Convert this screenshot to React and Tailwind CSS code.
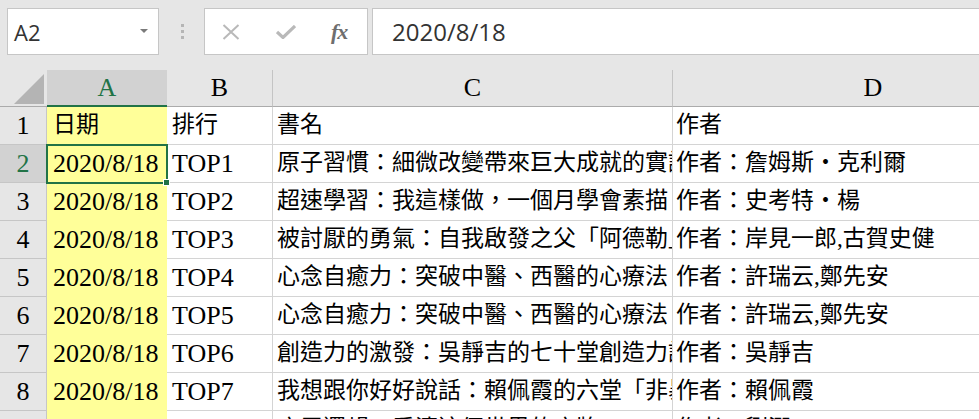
const SERIF = "font-['Liberation_Serif','Noto_Sans_CJK_TC',serif]";
const CJK = "font-['Liberation_Serif','Noto_Sans_CJK_TC',serif]";

const rows = [
  ["日期", "排行", "書名", "作者"],
  ["2020/8/18", "TOP1", "原子習慣：細微改變帶來巨大成就的實證法則", "作者：詹姆斯‧克利爾"],
  ["2020/8/18", "TOP2", "超速學習：我這樣做，一個月學會素描，一年學會四種語言", "作者：史考特‧楊"],
  ["2020/8/18", "TOP3", "被討厭的勇氣：自我啟發之父「阿德勒」的教導", "作者：岸見一郎,古賀史健"],
  ["2020/8/18", "TOP4", "心念自癒力：突破中醫、西醫的心療法", "作者：許瑞云,鄭先安"],
  ["2020/8/18", "TOP5", "心念自癒力：突破中醫、西醫的心療法", "作者：許瑞云,鄭先安"],
  ["2020/8/18", "TOP6", "創造力的激發：吳靜吉的七十堂創造力課", "作者：吳靜吉"],
  ["2020/8/18", "TOP7", "我想跟你好好說話：賴佩霞的六堂「非暴力溝通」課", "作者：賴佩霞"],
  ["2020/8/18", "TOP8", "底層邏輯：看清這個世界的底牌", "作者：劉潤"],
];

const isLatin = (s) => /^[\x00-\x7F]+$/.test(s);

function Cell({ text, className }) {
  const latin = isLatin(text);
  return (
    <div
      className={`h-[38px] overflow-hidden whitespace-nowrap text-black ${
        latin
          ? "text-[26px] leading-[37px] " + SERIF
          : "text-[23px] leading-[35px] " + CJK
      } ${className}`}
    >
      {text}
    </div>
  );
}

export default function App() {
  return (
    <div className="w-[979px] h-[419px] overflow-hidden bg-[#e6e6e6] relative">
      {/* Toolbar */}
      <div className="flex h-[70px] pt-[8px]">
        <div className="ml-[7px] w-[152px] h-[47px] bg-white border border-[#c6c6c6] flex items-center justify-between pl-[6px] pr-[10px]">
          <span className="font-['Open_Sans',sans-serif] text-[22px] text-[#333] leading-none">A2</span>
          <svg width="8" height="5" viewBox="0 0 8 5">
            <path d="M0 0 L8 0 L4 4 Z" fill="#7a7a7a" />
          </svg>
        </div>
        <div className="w-[45px] h-[47px] flex flex-col items-center justify-center gap-[3px] pl-[1px]">
          <div className="w-[3px] h-[3px] bg-[#b5b5b5]" />
          <div className="w-[3px] h-[3px] bg-[#b5b5b5]" />
          <div className="w-[3px] h-[3px] bg-[#b5b5b5]" />
        </div>
        <div className="w-[164px] h-[47px] bg-white border border-[#c6c6c6] flex items-center">
          <svg className="ml-[17px]" width="18" height="16" viewBox="0 0 18 16">
            <path d="M1.5 1 L16.5 15 M16.5 1 L1.5 15" stroke="#b9b9b9" strokeWidth="2" fill="none" />
          </svg>
          <svg className="ml-[36px]" width="20" height="14" viewBox="0 0 20 14">
            <path d="M1 7 L7 12.5 L19 1" stroke="#b9b9b9" strokeWidth="3.2" fill="none" />
          </svg>
          <span className="ml-[35px] font-['Liberation_Serif',serif] italic font-bold text-[22px] text-[#6e6e6e] leading-none tracking-[-1px]">
            fx
          </span>
        </div>
        <div className="ml-[4px] flex-1 h-[47px] bg-white border border-[#c6c6c6] border-r-0 flex items-center pl-[19px]">
          <span className="font-['Open_Sans',sans-serif] text-[24px] text-[#333] leading-none">2020/8/18</span>
        </div>
      </div>

      {/* Column headers */}
      <div className={`flex h-[37px] ${SERIF} text-[26px] leading-[36px]`}>
        <div className="w-[47px] h-[37px] border-b border-[#ababab] relative shrink-0">
          <svg className="absolute left-[14px] top-[4px]" width="30" height="30" viewBox="0 0 30 30">
            <path d="M30 0 L30 30 L0 30 Z" fill="#b4b4b4" />
          </svg>
        </div>
        <div className="w-[120px] shrink-0 bg-[#d2d2d2] border-b-2 border-[#217346] text-center text-[#217346]">A</div>
        <div className="w-[106px] shrink-0 border-b border-r border-[#ababab] border-r-[#c4c4c4] text-center">B</div>
        <div className="w-[400px] shrink-0 border-b border-r border-[#ababab] border-r-[#c4c4c4] text-center">C</div>
        <div className="w-[400px] shrink-0 border-b border-[#ababab] text-center">D</div>
      </div>

      {/* Rows */}
      <div className="relative bg-white">
        {rows.map((r, i) => (
          <div key={i} className="flex h-[38px]">
            <div
              className={`w-[47px] shrink-0 h-[38px] border-b border-r border-[#c6c6c6] text-center text-[26px] leading-[37px] ${SERIF} ${
                i === 1 ? "bg-[#d2d2d2] text-[#217346]" : "bg-[#e6e6e6] text-black"
              }`}
            >
              {i + 1}
            </div>
            <Cell text={r[0]} className="w-[120px] shrink-0 bg-[#ffff99] pl-[6px]" />
            <Cell text={r[1]} className="w-[106px] shrink-0 border-b border-r border-[#d4d4d4] pl-[5px]" />
            <Cell text={r[2]} className="w-[400px] shrink-0 border-b border-r border-[#d4d4d4] pl-[4px]" />
            <Cell text={r[3]} className="w-[400px] shrink-0 border-b border-[#d4d4d4] pl-[3px]" />
          </div>
        ))}
        {/* selection */}
        <div className="absolute left-[46px] top-[37px] w-[122px] h-[40px] border-2 border-[#217346] pointer-events-none" />
        <div className="absolute left-[163px] top-[72px] w-[7px] h-[7px] bg-[#217346] border border-white" />
      </div>
    </div>
  );
}
